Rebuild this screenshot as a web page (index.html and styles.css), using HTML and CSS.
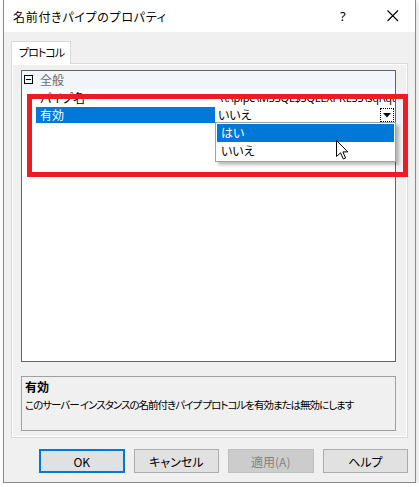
FILE: index.html
```html
<!DOCTYPE html>
<html lang="ja">
<head>
<meta charset="utf-8">
<title>名前付きパイプのプロパティ</title>
<link rel="stylesheet" href="styles.css">
</head>
<body>
<div class="window">
  <div class="titlebar">
    <span class="title">名前付きパイプのプロパティ</span>
    <span class="help">?</span>
    <svg class="close" width="12" height="12" viewBox="0 0 12 12"><path d="M0.5 0.5 L11 11 M11 0.5 L0.5 11" stroke="#000" stroke-width="1.1" fill="none"/></svg>
  </div>
  <div class="client">
    <div class="tabs"><div class="tab">プロトコル</div></div>
    <div class="page">
      <div class="grid">
        <div class="cat"><span class="toggle"></span><span class="cat-label">全般</span></div>
        <div class="row"><div class="name">パイプ名</div><div class="value latin">\\.\pipe\MSSQL$SQLEXPRESS\sql\query</div></div>
        <div class="row sel"><div class="name">有効</div><div class="value"><span>いいえ</span><span class="ddbtn"><svg width="8" height="5" viewBox="0 0 8 5"><path d="M0 0 H8 L4 4.5 Z" fill="#000"/></svg></span></div></div>
      </div>
      <div class="desc">
        <div class="desc-title">有効</div>
        <div class="desc-text">このサーバー インスタンスの名前付きパイプ プロトコルを有効または無効にします</div>
      </div>
    </div>
    <div class="buttons">
      <button class="btn default">OK</button>
      <button class="btn">キャンセル</button>
      <button class="btn disabled">適用(A)</button>
      <button class="btn">ヘルプ</button>
    </div>
  </div>
  <div class="droplist">
    <div class="opt selected">はい</div>
    <div class="opt">いいえ</div>
  </div>
  <div class="highlight"></div>
  <svg class="cursor" width="13" height="20" viewBox="0 0 13 20"><path d="M0.5 0.5 L0.5 16.5 L4.5 12.8 L7.3 19 L9.6 18 L6.9 11.9 L11.8 11.9 Z" fill="#fff" stroke="#000" stroke-width="1" stroke-linejoin="miter"/></svg>
</div>
</body>
</html>
```

FILE: styles.css
```css
* { box-sizing: border-box; }
html, body { margin: 0; padding: 0; background: #fff; }
body {
  font-family: "Noto Sans CJK JP", "Noto Sans", sans-serif;
  font-size: 11px;
  color: #000;
  font-feature-settings: "palt";
}
.window {
  position: relative;
  margin-left: 3px;
  width: 413px;
  height: 483px;
  border: 1px solid #8a8a8a;
  border-top: none;
  background: #f0f0f0;
  box-shadow: 2px 2px 6px rgba(0,0,0,0.12);
}
.titlebar {
  height: 32px;
  background: #fff;
  display: flex;
  align-items: center;
  padding-left: 9px;
}
.title { flex: 1; font-size: 12px; letter-spacing: 0.7px; line-height: 16px; padding-top: 1px; }
.help { width: 10px; font-family: "Noto Sans", sans-serif; font-size: 13px; margin-right: 37px; line-height: 16px; }
.close { margin-right: 16px; }
.client { padding: 9px 7px 0 7px; }
.tabs { display: flex; height: 22px; }
.tab {
  width: 60px;
  height: 23px;
  background: #fff;
  border: 1px solid #d9d9d9;
  border-bottom: none;
  padding-left: 7px;
  line-height: 21px;
  font-size: 11px;
  letter-spacing: -1px;
  white-space: nowrap;
  position: relative;
  z-index: 1;
}
.page {
  height: 375px;
  border: 1px solid #d9d9d9;
  box-shadow: inset 1px 1px 0 #fff, inset -1px -1px 0 #fff;
  padding: 6px 0 0 9px;
}
.grid {
  width: 375px;
  height: 292px;
  border: 1px solid #646464;
  background: #fff;
}
.cat {
  height: 18px;
  background: #f2f5fa;
  display: flex;
  align-items: center;
  padding-left: 2px;
}
.toggle {
  width: 9px;
  height: 9px;
  border: 1px solid #000;
  position: relative;
  margin-top: -2px;
}
.toggle::after {
  content: "";
  position: absolute;
  left: 1px;
  top: 3px;
  width: 5px;
  height: 1px;
  background: #000;
}
.cat-label { margin-left: 7px; color: #6d6d6d; font-size: 12px; line-height: 16px; }
.row {
  display: flex;
  height: 17px;
  border-top: 1px solid #fff;
  padding-left: 14px;
  font-size: 12px;
}
.name { width: 179px; padding-left: 4px; line-height: 16px; white-space: nowrap; overflow: hidden; }
.value {
  flex: 1;
  padding-left: 3px;
  line-height: 16px;
  white-space: nowrap;
  overflow: hidden;
  display: flex;
  justify-content: space-between;
  align-items: center;
}
.value.latin { font-family: "Noto Sans", sans-serif; font-size: 11px; letter-spacing: -0.2px; padding-left: 4px; }
.row.sel .name { background: #0078d7; color: #fff; }
.ddbtn {
  width: 14px;
  height: 14px;
  margin-right: 1px;
  border: 1px dotted #000;
  background: #fff;
  display: flex;
  align-items: center;
  justify-content: center;
  padding-top: 1px;
}
.desc {
  width: 375px;
  height: 55px;
  margin-top: 14px;
  border: 1px solid #a0a0a0;
  background: #f0f0f0;
  padding: 1px 3px;
}
.desc-title { font-weight: bold; font-size: 12px; line-height: 17px; }
.desc-text { font-size: 10.5px; line-height: 19px; letter-spacing: -1px; white-space: nowrap; }
.buttons {
  display: flex;
  gap: 9px;
  padding-left: 28px;
  margin-top: 11px;
}
.btn {
  width: 86px;
  height: 24px;
  background: #e1e1e1;
  border: 1px solid #adadad;
  font-family: inherit;
  font-size: 12px;
  font-feature-settings: "palt";
  color: #000;
  padding: 0;
}
.btn.default { border: 2px solid #0078d7; }
.btn.disabled { background: #cccccc; border-color: #bfbfbf; color: #838383; }
.droplist {
  position: absolute;
  left: 211px;
  top: 122px;
  width: 181px;
  height: 40px;
  background: #fff;
  border: 1px solid #a0a0a0;
  padding: 1px 1px;
  box-shadow: 3px 3px 3px rgba(0,0,0,0.25);
  font-size: 12px;
}
.opt { height: 18px; line-height: 18px; padding-left: 4px; }
.opt.selected { background: #0078d7; color: #fff; }
.highlight {
  position: absolute;
  left: 23px;
  top: 94px;
  width: 381px;
  height: 83px;
  border: 5px solid #ed1c24;
}
.cursor { position: absolute; left: 332px; top: 140px; }
```
